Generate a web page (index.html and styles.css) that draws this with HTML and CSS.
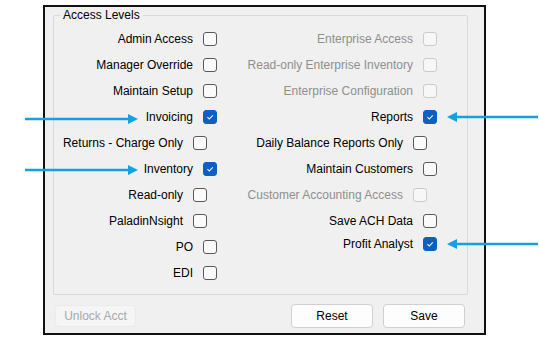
FILE: index.html
```html
<!DOCTYPE html>
<html lang="en">
<head>
<meta charset="UTF-8" />
<title>Access Levels</title>
<link rel="stylesheet" href="styles.css">
</head>
<body>

<div class="window">
  <fieldset class="group">
    <legend>Access Levels</legend>
    <div class="cols">
      <div class="col col-left">
        <div class="opt"><span>Admin Access</span><span class="box"></span></div>
        <div class="opt"><span>Manager Override</span><span class="box"></span></div>
        <div class="opt"><span>Maintain Setup</span><span class="box"></span></div>
        <div class="opt"><span>Invoicing</span><span class="box checked"><svg viewBox="0 0 14 14"><polyline points="4,7.2 6.2,9.4 10.2,5"/></svg></span></div>
        <div class="opt shift"><span>Returns - Charge Only</span><span class="box"></span></div>
        <div class="opt"><span>Inventory</span><span class="box checked"><svg viewBox="0 0 14 14"><polyline points="4,7.2 6.2,9.4 10.2,5"/></svg></span></div>
        <div class="opt shift"><span>Read-only</span><span class="box"></span></div>
        <div class="opt shift"><span>PaladinNsight</span><span class="box"></span></div>
        <div class="opt"><span>PO</span><span class="box"></span></div>
        <div class="opt"><span>EDI</span><span class="box"></span></div>
      </div>
      <div class="col col-right">
        <div class="opt disabled"><span>Enterprise Access</span><span class="box"></span></div>
        <div class="opt disabled"><span>Read-only Enterprise Inventory</span><span class="box"></span></div>
        <div class="opt disabled"><span>Enterprise Configuration</span><span class="box"></span></div>
        <div class="opt"><span>Reports</span><span class="box checked"><svg viewBox="0 0 14 14"><polyline points="4,7.2 6.2,9.4 10.2,5"/></svg></span></div>
        <div class="opt shift"><span>Daily Balance Reports Only</span><span class="box"></span></div>
        <div class="opt"><span>Maintain Customers</span><span class="box"></span></div>
        <div class="opt disabled shift"><span>Customer Accounting Access</span><span class="box"></span></div>
        <div class="opt"><span>Save ACH Data</span><span class="box"></span></div>
        <div class="opt last"><span>Profit Analyst</span><span class="box checked"><svg viewBox="0 0 14 14"><polyline points="4,7.2 6.2,9.4 10.2,5"/></svg></span></div>
      </div>
    </div>
  </fieldset>

  <div class="actions">
    <button class="btn btn-unlock" disabled>Unlock Acct</button>
    <button class="btn btn-reset">Reset</button>
    <button class="btn btn-save">Save</button>
  </div>
</div>

<!-- callout arrows -->
<svg class="arrows" width="539" height="340" viewBox="0 0 539 340">
  <g fill="#12a2e4" stroke="#12a2e4">
    <line x1="25" y1="119" x2="130" y2="119" stroke-width="2.5"/>
    <polygon points="128,114 138,119 128,124" stroke="none"/>
    <line x1="25" y1="170" x2="130" y2="170" stroke-width="2.5"/>
    <polygon points="128,165 138,170 128,175" stroke="none"/>
    <line x1="455" y1="117" x2="538" y2="117" stroke-width="2.5"/>
    <polygon points="457,112 447,117 457,122" stroke="none"/>
    <line x1="455" y1="244" x2="538" y2="244" stroke-width="2.5"/>
    <polygon points="457,239 447,244 457,249" stroke="none"/>
  </g>
</svg>

</body>
</html>
```

FILE: styles.css
```css
* {
  box-sizing: border-box;
}
body {
  margin: 0;
  background: #fff;
  font-family: "Liberation Sans", Arial, sans-serif;
  font-size: 12px;
  color: #000;
}
.window {
  margin: 5px 0 0 43px;
  width: 443px;
  height: 330px;
  border: 2px solid #111;
  background: #f0f0f0;
}
.group {
  margin: 1px 0 0 8px;
  width: 415px;
  height: 287px;
  padding: 0;
  border: 1px solid #d9d9d9;
  border-radius: 2px;
}
.group legend {
  margin-left: 6px;
  padding: 0 3px;
  line-height: 14px;
}
.cols {
  display: grid;
  grid-template-columns: 163px 220px;
  padding-top: 4px;
}
.opt {
  height: 26px;
  display: flex;
  align-items: center;
  justify-content: flex-end;
  gap: 10px;
  white-space: nowrap;
}
.opt.shift {
  padding-right: 10px;
}
.opt.last {
  margin-top: -3px;
}
.opt.disabled {
  color: #8f8f8f;
}
.box {
  width: 14px;
  height: 14px;
  flex: none;
  border: 1px solid #5a5a5a;
  border-radius: 3px;
  background: #fbfbfb;
}
.opt.disabled .box {
  border-color: #cbcbcb;
  background: #f7f7f7;
}
.box.checked {
  border-color: #0f5fc0;
  background: #0f5fc0;
}
.box svg {
  display: block;
  width: 12px;
  height: 12px;
  fill: none;
  stroke: #fff;
  stroke-width: 1.2;
}
.actions {
  display: flex;
  align-items: center;
  margin-top: 9px;
  padding: 0 19px 0 10px;
}
.btn {
  font-family: inherit;
  font-size: 12px;
  color: #000;
  height: 24px;
  padding: 0;
  border: 1px solid #d0d0d0;
  border-radius: 4px;
  background: #fdfdfd;
}
.btn-unlock {
  width: 81px;
  height: 22px;
  color: #a8a8a8;
  border-color: #ebebeb;
  background: #f5f5f5;
}
.btn-reset {
  width: 82px;
  margin-left: auto;
}
.btn-save {
  width: 82px;
  margin-left: 10px;
}
.arrows {
  position: absolute;
  top: 0;
  left: 0;
  pointer-events: none;
}
```
